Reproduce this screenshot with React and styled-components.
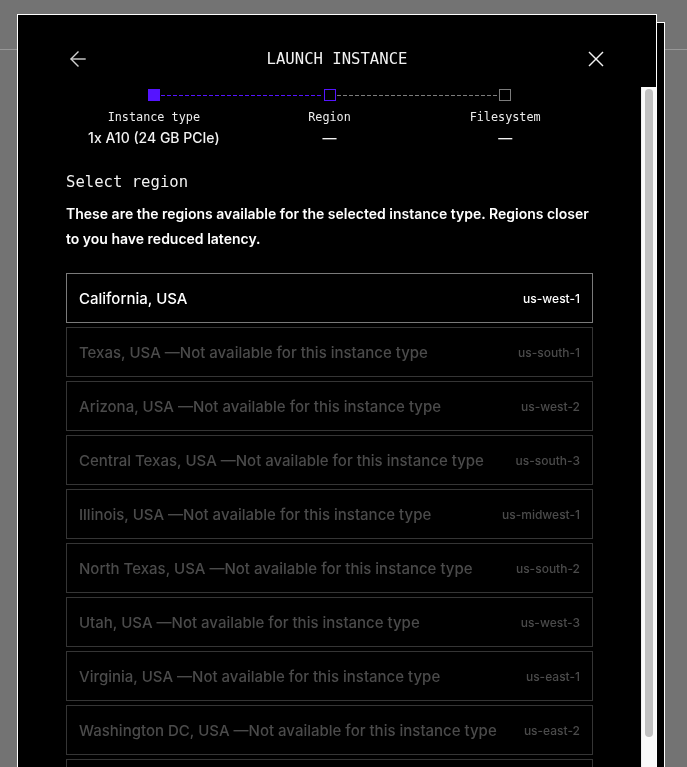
import React from "react";
import styled, { createGlobalStyle } from "styled-components";

const regions = [
  { name: "California, USA", code: "us-west-1", available: true },
  { name: "Texas, USA", code: "us-south-1" },
  { name: "Arizona, USA", code: "us-west-2" },
  { name: "Central Texas, USA", code: "us-south-3" },
  { name: "Illinois, USA", code: "us-midwest-1" },
  { name: "North Texas, USA", code: "us-south-2" },
  { name: "Utah, USA", code: "us-west-3" },
  { name: "Virginia, USA", code: "us-east-1" },
  { name: "Washington DC, USA", code: "us-east-2" },
  { name: "Frankfurt, Germany", code: "europe-central-1" },
  { name: "Tokyo, Japan", code: "asia-northeast-1" },
];

const steps = [
  { label: "Instance type", value: "1x A10 (24 GB PCIe)" },
  { label: "Region", value: "—" },
  { label: "Filesystem", value: "—" },
];

const ArrowLeft = () => (
  <svg width="24" height="24" viewBox="0 0 24 24" fill="none" stroke="#d0d0d0" strokeWidth="1.4" strokeLinecap="square">
    <path d="M12 19 5 12 12 5" />
    <path d="M19 12H5.5" />
  </svg>
);

const CloseIcon = () => (
  <svg width="24" height="24" viewBox="0 0 24 24" fill="none" stroke="#f2f2f2" strokeWidth="1.4">
    <path d="M5 5 19 19" />
    <path d="M19 5 5 19" />
  </svg>
);

const App = () => {
  return (
    <Page>
      <GlobalStyle />
      <TopBar />
      <Overlay>
        <Modal>
          <Header>
            <IconButton aria-label="Back">
              <ArrowLeft />
            </IconButton>
            <Title>LAUNCH INSTANCE</Title>
            <IconButton aria-label="Close">
              <CloseIcon />
            </IconButton>
          </Header>
          <BodyWrap>
            <Body>
              <StepTrack>
                <StepBox $state="done" />
                <StepLine $active />
                <StepBox $state="current" />
                <StepLine />
                <StepBox $state="todo" />
              </StepTrack>
              <StepGrid>
                {steps.map(step => (
                  <StepCol key={step.label}>
                    <StepLabel>{step.label}</StepLabel>
                    <StepValue>{step.value}</StepValue>
                  </StepCol>
                ))}
              </StepGrid>
              <SectionTitle>Select region</SectionTitle>
              <Description>
                These are the regions available for the selected instance type. Regions closer
                to you have reduced latency.
              </Description>
              <RegionList>
                {regions.map(r => (
                  <RegionRow key={r.code} $available={r.available}>
                    <RegionName>
                      {r.available ? r.name : `${r.name} —Not available for this instance type`}
                    </RegionName>
                    <RegionCode>{r.code}</RegionCode>
                  </RegionRow>
                ))}
              </RegionList>
            </Body>
            <ScrollTrack>
              <ScrollThumb />
            </ScrollTrack>
          </BodyWrap>
        </Modal>
      </Overlay>
    </Page>
  );
};

export default App;

const GlobalStyle = createGlobalStyle`
  html, body {
    margin: 0;
    padding: 0;
    overflow: hidden;
    background: #737373;
    font-family: Inter, "Noto Sans", sans-serif;
  }
  * {
    box-sizing: border-box;
  }
`;

const Page = styled.div`
  min-height: 100vh;
  background: #737373;
`;

const TopBar = styled.div`
  height: 50px;
  border-bottom: 1px solid #979797;
`;

const Overlay = styled.div`
  position: fixed;
  inset: 0;
  padding: 14px 0 0 17px;
  overflow: hidden;
`;

const Modal = styled.div`
  width: 640px;
  height: 807px;
  background: #000;
  border: 1px solid #fff;
  box-shadow: 8px 8px 0 -1px #000, 8px 8px 0 0 #fff;
  display: flex;
  flex-direction: column;
  color: #fff;
`;

const Header = styled.div`
  height: 72px;
  flex-shrink: 0;
  padding: 32px 48px 0;
  display: grid;
  grid-template-columns: 24px 1fr 24px;
  align-items: start;
`;

const IconButton = styled.button`
  width: 24px;
  height: 24px;
  padding: 0;
  border: none;
  background: none;
  cursor: pointer;
  display: flex;

  svg {
    display: block;
  }
`;

const Title = styled.h1`
  margin: 0;
  text-align: center;
  font-family: "DejaVu Sans Mono", "Liberation Mono", monospace;
  font-weight: 400;
  font-size: 15.6px;
  line-height: 25px;
  color: #f2f2f2;
`;

const BodyWrap = styled.div`
  flex: 1;
  min-height: 0;
  display: flex;
`;

const Body = styled.div`
  flex: 1;
  min-width: 0;
  overflow: hidden;
  padding: 2px 48px 48px;
`;

const ScrollTrack = styled.div`
  width: 15px;
  flex-shrink: 0;
  background: #fafafa;
  border-left: 1px solid #efefef;
  padding: 2px 3px 0 3px;
`;

const ScrollThumb = styled.div`
  height: 648px;
  background: #c1c1c1;
  border-radius: 4px;
`;

const StepTrack = styled.div`
  display: flex;
  align-items: center;
  padding: 0 calc(100% / 6 - 6px);
`;

const StepBox = styled.div`
  width: 12px;
  height: 12px;
  flex-shrink: 0;
  background: ${p => (p.$state === "done" ? "#5514ff" : "transparent")};
  border: 1px solid ${p => (p.$state === "todo" ? "#7c7c7c" : "#5514ff")};
`;

const StepLine = styled.div`
  flex: 1;
  height: 1px;
  margin: 0 1px;
  background: repeating-linear-gradient(
    90deg,
    ${p => (p.$active ? "#5514ff" : "#7c7c7c")} 0 4px,
    transparent 4px 6px
  );
`;

const StepGrid = styled.div`
  display: grid;
  grid-template-columns: repeat(3, 1fr);
  margin-top: 8px;
`;

const StepCol = styled.div`
  display: flex;
  flex-direction: column;
  align-items: center;
`;

const StepLabel = styled.div`
  font-family: "DejaVu Sans Mono", "Liberation Mono", monospace;
  font-size: 11.8px;
  line-height: 16px;
  color: #ececec;
`;

const StepValue = styled.div`
  margin-top: 3px;
  font-size: 14px;
  font-weight: 500;
  line-height: 20px;
  color: #f2f2f2;
`;

const SectionTitle = styled.h2`
  margin: 22px 0 0;
  font-family: "DejaVu Sans Mono", "Liberation Mono", monospace;
  font-weight: 400;
  font-size: 15.6px;
  line-height: 24px;
  color: #f2f2f2;
`;

const Description = styled.p`
  margin: 7px 0 0;
  font-size: 14px;
  font-weight: 600;
  line-height: 25px;
  color: #fff;
`;

const RegionList = styled.div`
  margin-top: 22px;
  display: flex;
  flex-direction: column;
  gap: 4px;
`;

const RegionRow = styled.div`
  height: 50px;
  flex-shrink: 0;
  padding: 0 12px;
  display: flex;
  align-items: center;
  justify-content: space-between;
  border: 1px solid ${p => (p.$available ? "#7a7a7a" : "#353535")};
  color: ${p => (p.$available ? "#fff" : "#4b4b4b")};
  cursor: ${p => (p.$available ? "pointer" : "default")};
`;

const RegionName = styled.span`
  font-size: 15px;
  font-weight: 500;
`;

const RegionCode = styled.span`
  font-size: 12px;
  font-weight: 500;
`;
